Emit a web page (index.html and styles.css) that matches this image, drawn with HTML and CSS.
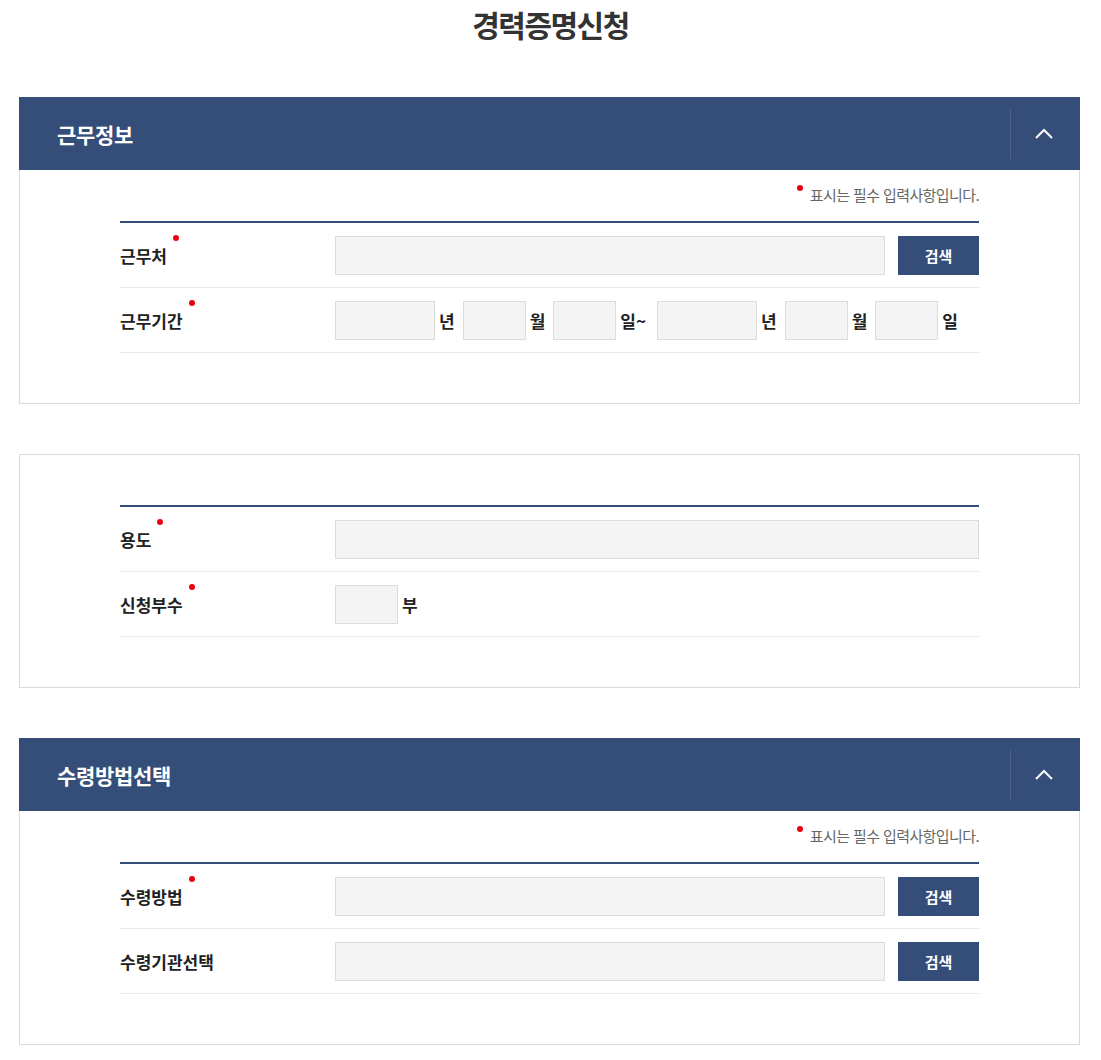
FILE: index.html
```html
<!DOCTYPE html>
<html lang="ko">
<head>
    <meta charset="UTF-8">
    <meta name="viewport" content="width=device-width, initial-scale=1.0">
    <title>경력증명신청</title>
    <link rel="stylesheet" href="styles.css">
</head>
<body>
    <h1 class="page-title">경력증명신청</h1>

    <div class="wrap">
        <section class="panel">
            <div class="panel-head">
                <h2>근무정보</h2>
                <button class="toggle" type="button" aria-label="접기">
                    <svg width="20" height="12" viewBox="0 0 20 12"><polyline points="2,10 10,2 18,10" fill="none" stroke="#fff" stroke-width="2"/></svg>
                </button>
            </div>
            <div class="panel-body">
                <p class="note"><span class="dot"></span>표시는 필수 입력사항입니다.</p>
                <div class="form">
                    <div class="row">
                        <div class="label"><span class="req">근무처</span></div>
                        <div class="field">
                            <input class="inp grow" type="text">
                            <button class="btn" type="button">검색</button>
                        </div>
                    </div>
                    <div class="row">
                        <div class="label"><span class="req">근무기간</span></div>
                        <div class="field">
                            <input class="inp w-year" type="text"><span class="unit">년</span>
                            <input class="inp w-sm" type="text"><span class="unit">월</span>
                            <input class="inp w-sm" type="text"><span class="unit tilde">일~</span>
                            <input class="inp w-year" type="text"><span class="unit">년</span>
                            <input class="inp w-sm" type="text"><span class="unit">월</span>
                            <input class="inp w-sm" type="text"><span class="unit">일</span>
                        </div>
                    </div>
                </div>
            </div>
        </section>

        <section class="panel">
            <div class="panel-body plain">
                <div class="form">
                    <div class="row">
                        <div class="label"><span class="req">용도</span></div>
                        <div class="field">
                            <input class="inp grow" type="text">
                        </div>
                    </div>
                    <div class="row">
                        <div class="label"><span class="req">신청부수</span></div>
                        <div class="field">
                            <input class="inp w-sm" type="text"><span class="unit">부</span>
                        </div>
                    </div>
                </div>
            </div>
        </section>

        <section class="panel">
            <div class="panel-head">
                <h2>수령방법선택</h2>
                <button class="toggle" type="button" aria-label="접기">
                    <svg width="20" height="12" viewBox="0 0 20 12"><polyline points="2,10 10,2 18,10" fill="none" stroke="#fff" stroke-width="2"/></svg>
                </button>
            </div>
            <div class="panel-body">
                <p class="note"><span class="dot"></span>표시는 필수 입력사항입니다.</p>
                <div class="form">
                    <div class="row">
                        <div class="label"><span class="req">수령방법</span></div>
                        <div class="field">
                            <input class="inp grow" type="text">
                            <button class="btn" type="button">검색</button>
                        </div>
                    </div>
                    <div class="row">
                        <div class="label"><span>수령기관선택</span></div>
                        <div class="field">
                            <input class="inp grow" type="text">
                            <button class="btn" type="button">검색</button>
                        </div>
                    </div>
                </div>
            </div>
        </section>
    </div>
</body>
</html>
```

FILE: styles.css
```css
body {
    margin: 0;
    padding: 0;
    background: #fff;
    color: #222;
    font-family: "Noto Sans CJK KR", "Noto Sans", sans-serif;
}

.page-title {
    margin: 0 0 49px;
    text-align: center;
    font-size: 30px;
    line-height: 48px;
    font-weight: 700;
    letter-spacing: -1.5px;
    color: #333;
}

.wrap {
    width: 1061px;
    margin: 0 19px;
}

.panel {
    margin-bottom: 50px;
}

.panel-head {
    display: flex;
    align-items: center;
    justify-content: space-between;
    height: 73px;
    padding-left: 38px;
    background: #344d79;
}

.panel-head h2 {
    margin: 0;
    color: #fff;
    font-size: 21px;
    font-weight: 700;
    letter-spacing: -0.3px;
}

.toggle {
    display: flex;
    align-items: center;
    justify-content: center;
    width: 66px;
    height: 50px;
    margin-right: 4px;
    padding: 0;
    border: 0;
    border-left: 1px solid rgba(255, 255, 255, 0.12);
    background: none;
    cursor: pointer;
}

.panel-body {
    border: 1px solid #d9d9d9;
    border-top: 0;
    padding: 15px 100px 50px;
}

.panel-body.plain {
    border-top: 1px solid #d9d9d9;
    padding-top: 50px;
}

.note {
    margin: 0 0 16px;
    text-align: right;
    font-size: 15px;
    line-height: 20px;
    color: #666;
    letter-spacing: -0.6px;
}

.dot {
    display: inline-block;
    width: 6px;
    height: 6px;
    margin-right: 7px;
    border-radius: 50%;
    background: #e60012;
    vertical-align: 10px;
}

.form {
    border-top: 2px solid #344d79;
}

.row {
    display: flex;
    align-items: center;
    min-height: 64px;
    border-bottom: 1px solid #e8e8e8;
}

.label {
    width: 215px;
    flex: none;
    font-size: 17px;
    font-weight: 700;
    color: #222;
}

.req {
    position: relative;
}

.req::after {
    content: "";
    position: absolute;
    right: -12px;
    top: -8px;
    width: 6px;
    height: 6px;
    border-radius: 50%;
    background: #e60012;
}

.field {
    display: flex;
    align-items: center;
    flex: 1;
}

.inp {
    box-sizing: border-box;
    height: 39px;
    margin: 0;
    padding: 0 10px;
    border: 1px solid #dcdcdc;
    background: #f4f4f4;
    font-family: inherit;
    font-size: 14px;
}

.grow {
    flex: 1;
    min-width: 0;
}

.w-year {
    width: 100px;
}

.w-sm {
    width: 63px;
}

.unit {
    margin: 0 8px 0 4px;
    font-size: 17px;
    font-weight: 700;
    color: #222;
}

.unit.tilde {
    margin-right: 11px;
}

.btn {
    width: 81px;
    height: 39px;
    margin-left: 13px;
    border: 0;
    background: #344d79;
    color: #fff;
    font-family: inherit;
    font-size: 15px;
    font-weight: 700;
    cursor: pointer;
}
```
